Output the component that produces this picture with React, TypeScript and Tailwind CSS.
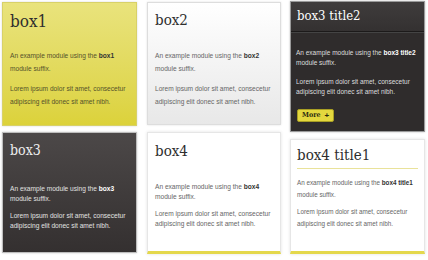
import React from "react";

const slab = "font-['DejaVu_Serif_Condensed','DejaVu_Serif',serif]";
const sans = "font-['Liberation_Sans',Arial,sans-serif]";

interface BoxProps {
  name: string;
  boxClass: string;
  titleClass: string;
  textClass: string;
  bodyClass: string;
  gapClass: string;
}

const Module: React.FC<BoxProps> = ({ name, boxClass, titleClass, textClass, bodyClass, gapClass }) => (
  <div className={boxClass}>
    <h3 className={`${slab} ${titleClass}`}>{name}</h3>
    <div className={`${sans} ${bodyClass} flex flex-col ${gapClass}`}>
      <p>
        An example module using the <b className={textClass}>{name}</b> module suffix.
      </p>
      <p>Lorem ipsum dolor sit amet, consecetur adipiscing elit donec sit amet nibh.</p>
    </div>
  </div>
);

export default function App() {
  return (
    <div className="w-[428px] h-[260px] bg-white flex pl-[2px] pt-[1px] overflow-hidden">
      {/* column 1 */}
      <div className="w-[135px] flex flex-col gap-[6px] pt-[1px]">
        <Module
          name="box1"
          boxClass="h-[124px] border border-[#d8d168] bg-gradient-to-b from-[#e9e37c] to-[#dcd23a] px-[7px] pt-[8px] shadow-[0_0_2px_rgba(0,0,0,0.15)]"
          titleClass="text-[17px] leading-[20px] text-[#2e2e2e]"
          textClass="text-[#333]"
          bodyClass="mt-[19px] text-[6.6px] leading-[12.5px] text-[#55522a]"
          gapClass="gap-[8px]"
        />
        <Module
          name="box3"
          boxClass="h-[121px] border border-[#bdbdbd] bg-gradient-to-b from-[#4c4848] to-[#343030] px-[7px] pt-[7px] shadow-[0_0_2px_rgba(0,0,0,0.2)]"
          titleClass="text-[14px] leading-[20px] text-[#eeeeee]"
          textClass="text-white"
          bodyClass="mt-[24px] text-[6.6px] leading-[9.5px] text-[#e2e2e2]"
          gapClass="gap-[8px]"
        />
      </div>

      {/* column 2 */}
      <div className="w-[134px] ml-[10px] flex flex-col gap-[7px] pt-[1px]">
        <Module
          name="box2"
          boxClass="h-[123px] border border-[#dddddd] bg-gradient-to-b from-[#ffffff] to-[#e8e8e8] px-[7px] pt-[7px] shadow-[0_0_2px_rgba(0,0,0,0.12)]"
          titleClass="text-[15px] leading-[20px] text-[#2e2e2e]"
          textClass="text-[#333]"
          bodyClass="mt-[20px] text-[6.6px] leading-[12.5px] text-[#666]"
          gapClass="gap-[8px]"
        />
        <Module
          name="box4"
          boxClass="h-[122px] border border-[#e6e6e6] border-b-[3px] border-b-[#e4d84c] bg-white px-[7px] pt-[8px] shadow-[0_0_3px_rgba(0,0,0,0.12)]"
          titleClass="text-[15px] leading-[20px] text-[#2e2e2e]"
          textClass="text-[#333]"
          bodyClass="mt-[21px] text-[6.6px] leading-[10px] text-[#666]"
          gapClass="gap-[7px]"
        />
      </div>

      {/* column 3 */}
      <div className="w-[135px] ml-[9px] flex flex-col gap-[7px]">
        <div className="h-[131px] border border-[#9a9a9a] bg-[#2f2c2c] flex flex-col shadow-[0_0_2px_rgba(0,0,0,0.25)]">
          <div className="h-[30px] bg-gradient-to-b from-[#3f3c3c] to-[#343131] border-b border-b-[#1c1a1a] px-[6px] pt-[5px]">
            <h3 className={`${slab} text-[13px] leading-[18px] text-white`}>box3 title2</h3>
          </div>
          <div className="border-t border-t-[#444] px-[5px]">
            <div className={`${sans} mt-[15px] text-[6.5px] leading-[10px] text-[#dddddd] flex flex-col gap-[9px]`}>
              <p>
                An example module using the <b className="text-white">box3 title2</b> module suffix.
              </p>
              <p>Lorem ipsum dolor sit amet, consecetur adipiscing elit donec sit amet nibh.</p>
            </div>
            <button
              className={`${slab} mt-[12px] ml-[1px] h-[13px] px-[4px] flex items-center gap-[4px] rounded-[2px] border border-[#a89e24] bg-[#e4d83e] text-[7px] font-bold text-[#2b2a10]`}
            >
              More <span className={`${sans} text-[8px]`}>+</span>
            </button>
          </div>
        </div>
        <div className="h-[115px] border border-[#e6e6e6] border-b-[3px] border-b-[#e4d84c] bg-white px-[6px] pt-[5px] shadow-[0_0_3px_rgba(0,0,0,0.12)]">
          <h3 className={`${slab} text-[15px] leading-[20px] text-[#2e2e2e] pb-[3px] border-b border-b-[#e9e29a]`}>
            box4 title1
          </h3>
          <div className={`${sans} mt-[8px] text-[6.3px] leading-[11.5px] text-[#666] flex flex-col gap-[6px]`}>
            <p>
              An example module using the <b className="text-[#333]">box4 title1</b> module suffix.
            </p>
            <p>Lorem ipsum dolor sit amet, consecetur adipiscing elit donec sit amet nibh.</p>
          </div>
        </div>
      </div>
    </div>
  );
}
